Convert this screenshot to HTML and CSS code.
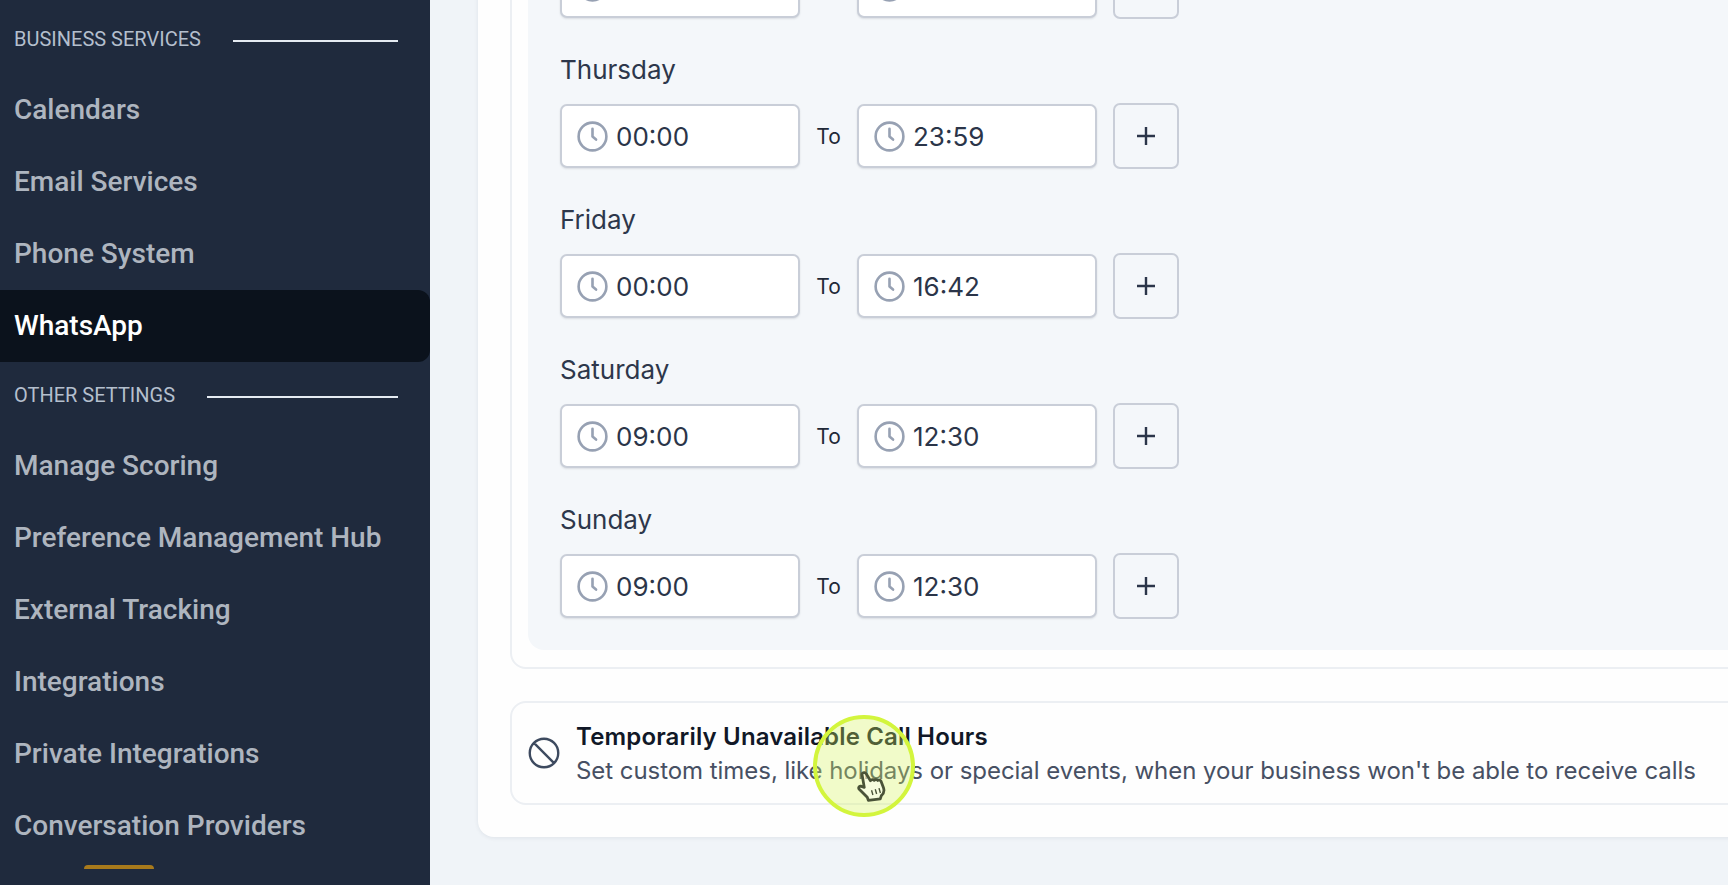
FILE: index.html
```html
<!DOCTYPE html>
<html lang="en">
<head>
  <meta charset="UTF-8">
  <meta name="viewport" content="width=device-width, initial-scale=1.0">
  <title>Business hours</title>
  <link rel="stylesheet" href="styles.css">
</head>
<body>
  <aside class="sidebar">
    <div class="nav-heading"><span>BUSINESS SERVICES</span><i class="nav-line"></i></div>
    <a class="nav-item">Calendars</a>
    <a class="nav-item">Email Services</a>
    <a class="nav-item">Phone System</a>
    <a class="nav-item active">WhatsApp</a>
    <div class="nav-heading"><span>OTHER SETTINGS</span><i class="nav-line"></i></div>
    <a class="nav-item">Manage Scoring</a>
    <a class="nav-item">Preference Management Hub</a>
    <a class="nav-item">External Tracking</a>
    <a class="nav-item">Integrations</a>
    <a class="nav-item">Private Integrations</a>
    <a class="nav-item">Conversation Providers</a>
    <div class="nav-badge"></div>
  </aside>

  <main class="main">
    <div class="card">
      <div class="hours-box">
        <div class="hours-panel">
          <section class="day">
            <div class="day-name">Wednesday</div>
            <div class="day-row">
              <div class="time-input"><svg class="clock" viewBox="0 0 24 24"><path d="M12 7v5l2.300 2m6.700-2a9 9 0 11-18 0 9 9 0 0118 0z"/></svg><span>00:00</span></div>
              <span class="to">To</span>
              <div class="time-input"><svg class="clock" viewBox="0 0 24 24"><path d="M12 7v5l2.300 2m6.700-2a9 9 0 11-18 0 9 9 0 0118 0z"/></svg><span>23:59</span></div>
              <button class="add-btn"><svg viewBox="0 0 20 20"><path d="M10 1v18M1 10h18"/></svg></button>
            </div>
          </section>
          <section class="day">
            <div class="day-name">Thursday</div>
            <div class="day-row">
              <div class="time-input"><svg class="clock" viewBox="0 0 24 24"><path d="M12 7v5l2.300 2m6.700-2a9 9 0 11-18 0 9 9 0 0118 0z"/></svg><span>00:00</span></div>
              <span class="to">To</span>
              <div class="time-input"><svg class="clock" viewBox="0 0 24 24"><path d="M12 7v5l2.300 2m6.700-2a9 9 0 11-18 0 9 9 0 0118 0z"/></svg><span>23:59</span></div>
              <button class="add-btn"><svg viewBox="0 0 20 20"><path d="M10 1v18M1 10h18"/></svg></button>
            </div>
          </section>
          <section class="day">
            <div class="day-name">Friday</div>
            <div class="day-row">
              <div class="time-input"><svg class="clock" viewBox="0 0 24 24"><path d="M12 7v5l2.300 2m6.700-2a9 9 0 11-18 0 9 9 0 0118 0z"/></svg><span>00:00</span></div>
              <span class="to">To</span>
              <div class="time-input"><svg class="clock" viewBox="0 0 24 24"><path d="M12 7v5l2.300 2m6.700-2a9 9 0 11-18 0 9 9 0 0118 0z"/></svg><span>16:42</span></div>
              <button class="add-btn"><svg viewBox="0 0 20 20"><path d="M10 1v18M1 10h18"/></svg></button>
            </div>
          </section>
          <section class="day">
            <div class="day-name">Saturday</div>
            <div class="day-row">
              <div class="time-input"><svg class="clock" viewBox="0 0 24 24"><path d="M12 7v5l2.300 2m6.700-2a9 9 0 11-18 0 9 9 0 0118 0z"/></svg><span>09:00</span></div>
              <span class="to">To</span>
              <div class="time-input"><svg class="clock" viewBox="0 0 24 24"><path d="M12 7v5l2.300 2m6.700-2a9 9 0 11-18 0 9 9 0 0118 0z"/></svg><span>12:30</span></div>
              <button class="add-btn"><svg viewBox="0 0 20 20"><path d="M10 1v18M1 10h18"/></svg></button>
            </div>
          </section>
          <section class="day">
            <div class="day-name">Sunday</div>
            <div class="day-row">
              <div class="time-input"><svg class="clock" viewBox="0 0 24 24"><path d="M12 7v5l2.300 2m6.700-2a9 9 0 11-18 0 9 9 0 0118 0z"/></svg><span>09:00</span></div>
              <span class="to">To</span>
              <div class="time-input"><svg class="clock" viewBox="0 0 24 24"><path d="M12 7v5l2.300 2m6.700-2a9 9 0 11-18 0 9 9 0 0118 0z"/></svg><span>12:30</span></div>
              <button class="add-btn"><svg viewBox="0 0 20 20"><path d="M10 1v18M1 10h18"/></svg></button>
            </div>
          </section>
        </div>
      </div>

      <div class="unavailable">
        <svg class="ban" viewBox="0 0 24 24"><path d="M18.364 18.364A9 9 0 005.636 5.636m12.728 12.728A9 9 0 015.636 5.636m12.728 12.728L5.636 5.636"/></svg>
        <div class="unavailable-copy">
          <div class="unavailable-title">Temporarily Unavailable Call Hours</div>
          <div class="unavailable-text">Set custom times, like holidays or special events, when your business won't be able to receive calls</div>
        </div>
      </div>
    </div>
  </main>

  <!-- recording cursor highlight -->
  <div class="cursor-ring"></div>
  <svg class="cursor-hand" viewBox="0 0 30 30">
    <path d="M7 3c1.200-1 2.800-.6 3.500.6l4 6.400c.8-1.200 2.600-1.400 3.500-.3.8-1 2.600-1 3.400.1 1-.7 2.500-.3 3.100.9l2.200 6c1 3 .1 5.600-2 7.300l-1 3-11.200 1.400-1-2.800-7.500-7.600c-1.200-1.300-.2-3.200 1.400-2.900l3.300 1.200L6.800 5.400c-.3-.9-.4-1.800.2-2.400z"/>
    <path class="cursor-lines" d="M15.500 19l1.300 4.500M19 18l1.300 4.500M22.500 17l1.300 4.500"/>
  </svg>
</body>
</html>
```

FILE: styles.css
```css
:root {
  --navy: #1f2a3d;
  --ink: #2b3549;
  --border: #c9ced8;
  --panel: #f4f7fa;
  --page: #f0f4f8;
}
* {
  box-sizing: border-box;
}
html, body {
  height: 100%;
}
body {
  margin: 0;
  display: flex;
  overflow: hidden;
  background-color: var(--page);
  font-family: 'Inter', sans-serif;
  color: var(--ink);
}

/* sidebar */
.sidebar {
  width: 430px;
  flex-shrink: 0;
  height: 885px;
  padding-top: 6px;
  background-color: var(--navy);
  font-family: 'Roboto', sans-serif;
}
.nav-heading {
  height: 68px;
  display: flex;
  align-items: center;
  gap: 32px;
  padding: 0 32px 3px 14px;
  color: #b4bfcd;
  font-size: 20px;
}
.nav-line {
  flex: 1;
  height: 2px;
  margin-top: 5px;
  background-color: #e5ebf2;
}
.nav-item {
  display: flex;
  align-items: center;
  height: 72px;
  padding: 0 0 1px 14px;
  border-radius: 0 12px 12px 0;
  color: #aeb5bf;
  font-size: 28px;
  font-weight: 500;
}
.nav-item.active {
  background-color: #0b121c;
  color: #ffffff;
}
.nav-badge {
  width: 70px;
  height: 4px;
  margin: 3px 0 0 84px;
  border-radius: 6px 6px 0 0;
  background-color: #a87a1c;
}

/* main */
.main {
  flex: 1;
  min-width: 0;
  overflow: hidden;
  padding-left: 48px;
}
.card {
  margin: -130px -80px 0 0;
  padding: 20px 0 32px 32px;
  background-color: #fefefe;
  border-radius: 16px;
  box-shadow: 0 1px 4px rgba(30, 41, 59, 0.08);
}
.hours-box {
  padding: 0 0 17px 16px;
  border: 2px solid #eceff3;
  border-radius: 16px;
}
.hours-panel {
  padding: 13px 0 31px 32px;
  background-color: var(--panel);
  border-radius: 16px;
}
.day {
  margin-bottom: 36px;
}
.day:last-child {
  margin-bottom: 0;
}
.day-name {
  height: 30px;
  margin-bottom: 18px;
  line-height: 30px;
  font-size: 26px;
  color: #2d374b;
}
.day-row {
  display: flex;
  align-items: center;
  height: 66px;
}
.time-input {
  display: flex;
  align-items: center;
  gap: 5px;
  width: 240px;
  height: 64px;
  padding-left: 12px;
  background-color: #ffffff;
  border: 2px solid var(--border);
  border-radius: 7px;
  box-shadow: 0 1px 2px rgba(30, 41, 59, 0.12);
  font-size: 26px;
}
.clock {
  width: 37px;
  height: 37px;
  fill: none;
  stroke: #97a1b3;
  stroke-width: 1.7;
  stroke-linecap: round;
  stroke-linejoin: round;
}
.to {
  width: 57px;
  text-align: center;
  font-size: 21px;
  color: #1f2937;
}
.add-btn {
  display: flex;
  align-items: center;
  justify-content: center;
  width: 66px;
  height: 66px;
  margin-left: 16px;
  padding: 0;
  background-color: var(--panel);
  border: 2px solid var(--border);
  border-radius: 7px;
}
.add-btn svg {
  width: 20px;
  height: 20px;
  fill: none;
  stroke: #2b3549;
  stroke-width: 2.4;
}
.unavailable {
  display: flex;
  align-items: center;
  gap: 13px;
  height: 104px;
  margin-top: 32px;
  padding-left: 13px;
  border: 2px solid #eceff3;
  border-radius: 16px;
}
.ban {
  width: 38px;
  height: 38px;
  fill: none;
  stroke: #3d4a5f;
  stroke-width: 1.5;
  stroke-linecap: round;
  stroke-linejoin: round;
}
.unavailable-copy {
  padding-top: 2px;
}
.unavailable-title {
  font-size: 24px;
  font-weight: 600;
  line-height: 32px;
  letter-spacing: 0.16px;
  color: #111827;
}
.unavailable-text {
  margin-top: 2px;
  font-size: 24px;
  line-height: 32px;
  letter-spacing: -0.05px;
  color: #475063;
}

/* cursor overlay */
.cursor-ring {
  position: absolute;
  left: 813px;
  top: 715px;
  width: 102px;
  height: 102px;
  border: 4px solid #d3f53d;
  border-radius: 50%;
  background-color: rgba(214, 245, 90, 0.32);
}
.cursor-hand {
  position: absolute;
  left: 855px;
  top: 770px;
  width: 32px;
  height: 32px;
  filter: blur(0.7px);
}
.cursor-hand path {
  fill: rgba(255, 255, 255, 0.4);
  stroke: #4a5338;
  stroke-width: 2.6;
  stroke-linejoin: round;
}
.cursor-hand .cursor-lines {
  fill: none;
  stroke-width: 1.3;
}
```
